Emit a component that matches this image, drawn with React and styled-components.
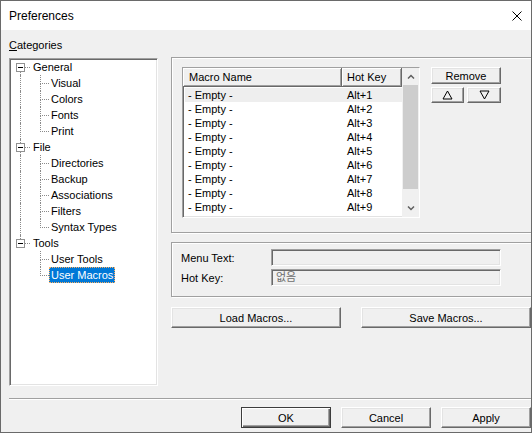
import React from 'react';
import styled, { createGlobalStyle, css } from 'styled-components';

const Global = createGlobalStyle`
  html, body { margin: 0; padding: 0; background: #f0f0f0; }
  body { font-family: "Liberation Sans", Arial, sans-serif; font-size: 11px; color: #000; }
  * { box-sizing: border-box; }
`;

const sunken = css`
  border: 1px solid;
  border-color: #a0a0a0 #fff #fff #a0a0a0;
  box-shadow: inset 1px 1px 0 #696969, inset -1px -1px 0 #e3e3e3;
`;

const Window = styled.div`
  width: 532px;
  height: 433px;
  border: 1px solid #6a6a6a;
  background: #f0f0f0;
  overflow: hidden;
  display: flex;
  flex-direction: column;
`;

const TitleBar = styled.div`
  height: 29px;
  flex-shrink: 0;
  background: #fff;
  display: flex;
  align-items: center;
  justify-content: space-between;
  padding: 0 9px 0 8px;
  font-size: 12px;
`;

const Title = styled.span`
  font-family: "Liberation Sans", Arial, sans-serif;
  font-size: 12px;
  padding-top: 1px;
`;

const Body = styled.div`
  flex: 1;
  display: flex;
  flex-direction: column;
  padding: 9px 0 0 8px;
`;

const Main = styled.div`
  display: flex;
  gap: 13px;
  align-items: flex-start;
`;

const LeftCol = styled.div`
  width: 149px;
  flex-shrink: 0;
  display: flex;
  flex-direction: column;
`;

const CatLabel = styled.div`
  height: 13px;
  line-height: 13px;
  margin-bottom: 6px;
  u { text-decoration: underline; text-underline-offset: 1px; }
`;

const TreeBox = styled.div`
  ${sunken};
  height: 328px;
  background: #fff;
  padding: 0 0 0 1px;
`;

const TRow = styled.div`
  display: flex;
  height: 16px;
  align-items: stretch;
`;

const RootGutter = styled.div`
  display: flex;
  align-items: stretch;
  padding-left: 5px;
`;

const BoxCol = styled.div`
  width: 9px;
  display: flex;
  flex-direction: column;
`;

const VStub = styled.div`
  margin-left: 4px;
  height: ${p => (p.$h ? `${p.$h}px` : 'auto')};
  flex: ${p => (p.$h ? '0 0 auto' : '1')};
  border-left: 1px dotted ${p => (p.$on ? '#8a8a8a' : 'transparent')};
`;

const ExpBox = styled.div`
  width: 9px;
  height: 9px;
  flex-shrink: 0;
  border: 1px solid #919191;
  background: #fff;
  display: flex;
  align-items: center;
  justify-content: center;
  &::after {
    content: '';
    width: 5px;
    height: 1px;
    background: #000;
  }
`;

const HStub = styled.div`
  width: 5px;
  margin-top: 8px;
  height: 1px;
  border-top: 1px dotted #8a8a8a;
`;

const Trunk = styled.div`
  width: 20px;
  flex-shrink: 0;
  display: flex;
`;

const TrunkLine = styled.div`
  margin-left: 9px;
  border-left: 1px dotted ${p => (p.$on ? '#8a8a8a' : 'transparent')};
`;

const Connector = styled.div`
  width: 18px;
  flex-shrink: 0;
  padding-left: 9px;
  display: flex;
  flex-direction: column;
`;

const ConnTop = styled.div`
  height: 9px;
  flex-shrink: 0;
  border-left: 1px dotted #8a8a8a;
  border-bottom: 1px dotted #8a8a8a;
`;

const ConnBottom = styled.div`
  flex: 1;
  border-left: 1px dotted ${p => (p.$on ? '#8a8a8a' : 'transparent')};
`;

const NodeLabel = styled.div`
  line-height: 16px;
  padding: 0 2px;
  margin-left: ${p => (p.$root ? '1px' : '0')};
  white-space: nowrap;
  ${p =>
    p.$selected &&
    css`
      background: #0078d7;
      color: #fff;
      border: 1px dotted #ffb060;
      padding: 0 1px;
      line-height: 14px;
    `}
`;

const RightCol = styled.div`
  width: 362px;
  flex-shrink: 0;
  padding-top: 18px;
  display: flex;
  flex-direction: column;
`;

const Group = styled.div`
  border: 1px solid #a0a0a0;
  box-shadow: inset 1px 1px 0 #fff, 1px 1px 0 #fff;
  height: ${p => p.$h}px;
  margin-bottom: ${p => p.$mb || 0}px;
`;

const MacroGroupInner = styled.div`
  display: flex;
  gap: 11px;
  padding: 9px 0 0 10px;
  align-items: flex-start;
`;

const ListView = styled.div`
  ${sunken};
  width: 238px;
  height: 151px;
  background: #fff;
  display: flex;
`;

const ListMain = styled.div`
  width: 219px;
  display: flex;
  flex-direction: column;
  overflow: hidden;
`;

const Header = styled.div`
  display: flex;
  height: 19px;
  flex-shrink: 0;
`;

const HeadCell = styled.div`
  width: ${p => p.$w}px;
  height: 19px;
  background: #f0f0f0;
  border-right: 1px solid #696969;
  border-bottom: 1px solid #696969;
  box-shadow: inset 1px 1px 0 #fff, inset -1px -1px 0 #a0a0a0;
  padding-left: ${p => p.$pl}px;
  line-height: 18px;
  white-space: nowrap;
`;

const Rows = styled.div`
  padding: 1px 0 0 2px;
  overflow: hidden;
  flex: 1;
`;

const LRow = styled.div`
  display: flex;
  height: 14px;
  line-height: 14px;
  background: ${p => (p.$hot ? '#eeeeee' : 'transparent')};
`;

const NameCell = styled.div`
  width: 157px;
  padding-left: 3px;
  white-space: nowrap;
`;

const KeyCell = styled.div`
  padding-left: 5px;
  white-space: nowrap;
`;

const ScrollBar = styled.div`
  width: 17px;
  flex-shrink: 0;
  display: flex;
  flex-direction: column;
  background: #f0f0f0;
`;

const ScrollArrow = styled.div`
  height: 17px;
  flex-shrink: 0;
  display: flex;
  align-items: center;
  justify-content: center;
`;

const Thumb = styled.div`
  height: 104px;
  margin: 0 1px;
  background: #cdcdcd;
`;

const Track = styled.div`
  flex: 1;
`;

const SideButtons = styled.div`
  width: 70px;
  display: flex;
  flex-direction: column;
  gap: 3px;
`;

const ArrowRow = styled.div`
  display: flex;
  gap: 3px;
`;

const Btn = styled.button`
  font-family: "Liberation Sans", Arial, sans-serif;
  font-size: 11px;
  color: #000;
  background: #f0f0f0;
  width: ${p => (p.$w ? `${p.$w}px` : 'auto')};
  height: ${p => p.$h || 21}px;
  padding: 0;
  margin: 0;
  border: 1px solid;
  border-color: #fff #696969 #696969 #fff;
  box-shadow: inset -1px -1px 0 #a0a0a0, inset 1px 1px 0 #e3e3e3;
  display: flex;
  align-items: center;
  justify-content: center;
  flex-shrink: 0;
  ${p =>
    p.$default &&
    css`
      border-color: #3c3c3c;
      box-shadow: inset 1px 1px 0 #fff, inset -1px -1px 0 #696969, inset -2px -2px 0 #a0a0a0;
    `}
`;

const FieldsInner = styled.div`
  padding: 6px 0 0 9px;
  display: flex;
  flex-direction: column;
  gap: 3px;
`;

const FieldRow = styled.div`
  display: flex;
  align-items: center;
`;

const FieldLabel = styled.div`
  width: 90px;
  flex-shrink: 0;
`;

const Field = styled.div`
  ${sunken};
  width: 230px;
  height: 17px;
  background: #f0f0f0;
  padding-left: 4px;
  line-height: 15px;
  color: #6d6d6d;
  font-family: "Liberation Sans", "Noto Sans CJK KR", sans-serif;
  font-size: 11px;
`;

const MacroButtons = styled.div`
  display: flex;
  gap: 20px;
  margin-top: 10px;
`;

const Separator = styled.div`
  margin-top: 12px;
  height: 2px;
  border-top: 1px solid #a0a0a0;
  border-bottom: 1px solid #fff;
`;

const Footer = styled.div`
  display: flex;
  justify-content: flex-end;
  gap: 10px;
  margin-top: 7px;
`;

const CloseIcon = () => (
  <svg width="10" height="10" viewBox="0 0 10 10">
    <path d="M0.5 0.5 L9.5 9.5 M9.5 0.5 L0.5 9.5" stroke="#000" strokeWidth="1" fill="none" />
  </svg>
);

const TriUp = () => (
  <svg width="11" height="10" viewBox="0 0 11 10">
    <path d="M5.5 1 L10 9 L1 9 Z" stroke="#000" strokeWidth="1" fill="none" />
  </svg>
);

const TriDown = () => (
  <svg width="11" height="10" viewBox="0 0 11 10">
    <path d="M1 1 L10 1 L5.5 9 Z" stroke="#000" strokeWidth="1" fill="none" />
  </svg>
);

const Chevron = ({ up }) => (
  <svg width="8" height="5" viewBox="0 0 8 5">
    <path d={up ? 'M1 4.5 L4 1.5 L7 4.5' : 'M1 0.5 L4 3.5 L7 0.5'} stroke="#606060" strokeWidth="1.5" fill="none" />
  </svg>
);

const tree = [
  { label: 'General', children: ['Visual', 'Colors', 'Fonts', 'Print'] },
  { label: 'File', children: ['Directories', 'Backup', 'Associations', 'Filters', 'Syntax Types'] },
  { label: 'Tools', children: ['User Tools', 'User Macros'] },
];

const macros = ['1', '2', '3', '4', '5', '6', '7', '8', '9', '0'];

export default function App() {
  return (
    <>
      <Global />
      <Window>
        <TitleBar>
          <Title>Preferences</Title>
          <CloseIcon />
        </TitleBar>
        <Body>
          <Main>
            <LeftCol>
              <CatLabel>
                <u>C</u>ategories
              </CatLabel>
              <TreeBox>
                {tree.map((node, i) => {
                  const first = i === 0;
                  const last = i === tree.length - 1;
                  return (
                    <React.Fragment key={node.label}>
                      <TRow>
                        <RootGutter>
                          <BoxCol>
                            <VStub $h={4} $on={!first} />
                            <ExpBox />
                            <VStub $on={!last} />
                          </BoxCol>
                          <HStub />
                        </RootGutter>
                        <NodeLabel $root>{node.label}</NodeLabel>
                      </TRow>
                      {node.children.map((c, j) => {
                        const lastChild = j === node.children.length - 1;
                        return (
                          <TRow key={c}>
                            <Trunk>
                              <TrunkLine $on={!last} />
                            </Trunk>
                            <Connector>
                              <ConnTop />
                              <ConnBottom $on={!lastChild} />
                            </Connector>
                            <NodeLabel $selected={c === 'User Macros'}>{c}</NodeLabel>
                          </TRow>
                        );
                      })}
                    </React.Fragment>
                  );
                })}
              </TreeBox>
            </LeftCol>
            <RightCol>
              <Group $h={176} $mb={9}>
                <MacroGroupInner>
                  <ListView>
                    <ListMain>
                      <Header>
                        <HeadCell $w={159} $pl={6}>Macro Name</HeadCell>
                        <HeadCell $w={60} $pl={5}>Hot Key</HeadCell>
                      </Header>
                      <Rows>
                        {macros.map((m, k) => (
                          <LRow key={m} $hot={k === 0}>
                            <NameCell>- Empty -</NameCell>
                            <KeyCell>Alt+{m}</KeyCell>
                          </LRow>
                        ))}
                      </Rows>
                    </ListMain>
                    <ScrollBar>
                      <ScrollArrow>
                        <Chevron up />
                      </ScrollArrow>
                      <Thumb />
                      <Track />
                      <ScrollArrow>
                        <Chevron />
                      </ScrollArrow>
                    </ScrollBar>
                  </ListView>
                  <SideButtons>
                    <Btn $w={70} $h={17}>Remove</Btn>
                    <ArrowRow>
                      <Btn $w={33} $h={16}>
                        <TriUp />
                      </Btn>
                      <Btn $w={34} $h={16}>
                        <TriDown />
                      </Btn>
                    </ArrowRow>
                  </SideButtons>
                </MacroGroupInner>
              </Group>
              <Group $h={55}>
                <FieldsInner>
                  <FieldRow>
                    <FieldLabel>Menu Text:</FieldLabel>
                    <Field />
                  </FieldRow>
                  <FieldRow>
                    <FieldLabel>Hot Key:</FieldLabel>
                    <Field>없음</Field>
                  </FieldRow>
                </FieldsInner>
              </Group>
              <MacroButtons>
                <Btn $w={170}>Load Macros...</Btn>
                <Btn $w={170}>Save Macros...</Btn>
              </MacroButtons>
            </RightCol>
          </Main>
          <Separator />
          <Footer>
            <Btn $w={90} $default>OK</Btn>
            <Btn $w={90}>Cancel</Btn>
            <Btn $w={90}>Apply</Btn>
          </Footer>
        </Body>
      </Window>
    </>
  );
}
